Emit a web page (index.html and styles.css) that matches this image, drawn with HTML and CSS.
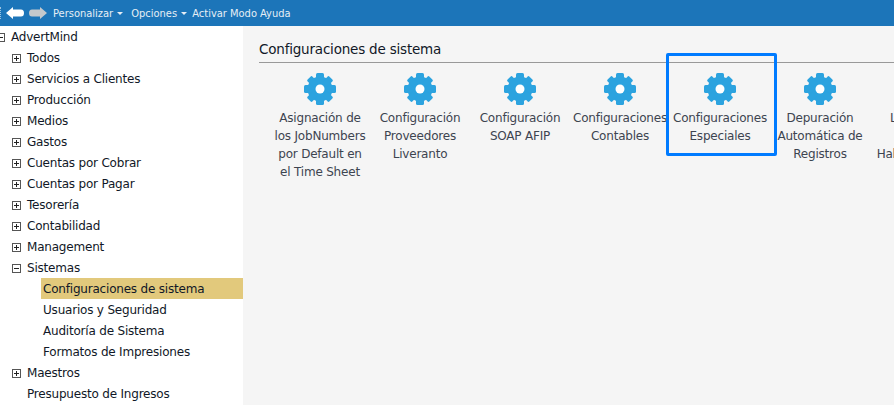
FILE: index.html
```html
<!DOCTYPE html>
<html>
<head>
    <title>Configuraciones de sistema</title>
    <link rel="stylesheet" href="styles.css">
</head>
<body>
    <div class="topbar">
        <span class="grip"></span>
        <svg class="arrow" width="18" height="12" viewBox="0 0 18 12"><path d="M0 6 7 0V2.500H15Q18 2.500 18 6T15 9.500H7V12Z" fill="#fff"/></svg>
        <svg class="arrow" width="18" height="12" viewBox="0 0 18 12"><path d="M18 6 11 0V2.500H3Q0 2.500 0 6T3 9.500H11V12Z" fill="#c4c8cc"/></svg>
        <a class="menu first">Personalizar <i class="caret"></i></a>
        <a class="menu">Opciones <i class="caret"></i></a>
        <a class="menu">Activar Modo Ayuda</a>
    </div>
    <div class="content">
        <div class="sidebar">
            <div class="row root"><span class="box minus"></span>AdvertMind</div>
            <div class="row"><span class="box plus"></span>Todos</div>
            <div class="row"><span class="box plus"></span>Servicios a Clientes</div>
            <div class="row"><span class="box plus"></span>Producción</div>
            <div class="row"><span class="box plus"></span>Medios</div>
            <div class="row"><span class="box plus"></span>Gastos</div>
            <div class="row"><span class="box plus"></span>Cuentas por Cobrar</div>
            <div class="row"><span class="box plus"></span>Cuentas por Pagar</div>
            <div class="row"><span class="box plus"></span>Tesorería</div>
            <div class="row"><span class="box plus"></span>Contabilidad</div>
            <div class="row"><span class="box plus"></span>Management</div>
            <div class="row"><span class="box minus"></span>Sistemas</div>
            <div class="row sub selected">Configuraciones de sistema</div>
            <div class="row sub">Usuarios y Seguridad</div>
            <div class="row sub">Auditoría de Sistema</div>
            <div class="row sub">Formatos de Impresiones</div>
            <div class="row"><span class="box plus"></span>Maestros</div>
            <div class="row leaf">Presupuesto de Ingresos</div>
        </div>
        <div class="main">
            <h1>Configuraciones de sistema</h1>
            <div class="items">
                <div class="item">
                    <svg class="gear" viewBox="0 0 32 32"><use href="#gear"/></svg>
                    <span>Asignación de los JobNumbers por Default en el Time Sheet</span>
                </div>
                <div class="item">
                    <svg class="gear" viewBox="0 0 32 32"><use href="#gear"/></svg>
                    <span>Configuración Proveedores Liveranto</span>
                </div>
                <div class="item">
                    <svg class="gear" viewBox="0 0 32 32"><use href="#gear"/></svg>
                    <span>Configuración SOAP AFIP</span>
                </div>
                <div class="item">
                    <svg class="gear" viewBox="0 0 32 32"><use href="#gear"/></svg>
                    <span>Configuraciones Contables</span>
                </div>
                <div class="item active">
                    <svg class="gear" viewBox="0 0 32 32"><use href="#gear"/></svg>
                    <span>Configuraciones Especiales</span>
                </div>
                <div class="item">
                    <svg class="gear" viewBox="0 0 32 32"><use href="#gear"/></svg>
                    <span>Depuración Automática de Registros</span>
                </div>
                <div class="item">
                    <svg class="gear" viewBox="0 0 32 32"><use href="#gear"/></svg>
                    <span>Liberación<br>Reportes<br>Habilitación de</span>
                </div>
            </div>
        </div>
    </div>
    <svg width="0" height="0" class="defs">
        <defs>
            <g id="gear" fill="#2ca3df">
                <circle cx="16" cy="16" r="12.5"/>
                <rect x="12" y="0" width="8" height="32" rx="1.5"/>
                <rect x="0" y="12" width="32" height="8" rx="1.5"/>
                <rect x="12.500" y="0.500" width="7" height="31" rx="1.5" transform="rotate(45 16 16)"/>
                <rect x="12.500" y="0.500" width="7" height="31" rx="1.5" transform="rotate(135 16 16)"/>
                <circle cx="16" cy="16" r="4.5" fill="#fff"/>
            </g>
        </defs>
    </svg>
</body>
</html>
```
FILE: styles.css
```css
body {
    margin: 0;
    height: 405px;
    overflow: hidden;
    font-family: "DejaVu Sans", sans-serif;
    font-size: 12px;
    letter-spacing: -0.2px;
    color: #111827;
    background-color: #f5f5f5;
}

.topbar {
    height: 26px;
    background-color: #1c75b9;
    color: #e6eef5;
    display: flex;
    align-items: center;
    font-family: "DejaVu Sans Condensed", "DejaVu Sans", sans-serif;
    font-size: 11px;
    letter-spacing: 0;
}

.grip {
    width: 0;
    height: 12px;
    margin-right: 5px;
    border-left: 1px dotted #9cc4e2;
}

.arrow {
    margin-right: 5px;
}

.menu {
    margin-right: 5px;
    white-space: nowrap;
}

.menu.first {
    margin-left: 1px;
    margin-right: 8px;
}

.caret {
    display: inline-block;
    width: 0;
    height: 0;
    margin-left: 1px;
    vertical-align: middle;
    border-top: 3px solid #e6eef5;
    border-left: 3px solid transparent;
    border-right: 3px solid transparent;
}

.content {
    display: flex;
    height: 379px;
}

.sidebar {
    width: 243px;
    flex-shrink: 0;
    background-color: #fff;
}

.row {
    box-sizing: border-box;
    height: 21px;
    line-height: 19px;
    padding-top: 2px;
    display: flex;
    align-items: center;
    padding-left: 12px;
    white-space: nowrap;
}

.row.root {
    padding-left: 0;
}

.row.leaf {
    padding-left: 27px;
}

.row.sub {
    margin-left: 41px;
    padding-left: 2px;
}

.row.selected {
    background-color: #e2c97c;
}

.box {
    width: 7px;
    height: 7px;
    border: 1px solid #555;
    margin-right: 6px;
    flex-shrink: 0;
    background:
        linear-gradient(#222, #222) center / 5px 1px no-repeat;
}

.box.plus {
    background:
        linear-gradient(#222, #222) center / 5px 1px no-repeat,
        linear-gradient(#222, #222) center / 1px 5px no-repeat;
}

.root .box {
    margin-left: -4px;
    margin-right: 6px;
}

.main {
    flex: 1;
    min-width: 0;
    padding: 14px 0 0 16px;
    overflow: hidden;
}

h1 {
    margin: 0;
    font-size: 13.5px;
    font-weight: normal;
    height: 22px;
    line-height: 19px;
    border-bottom: 1px solid #999;
}

.items {
    display: flex;
    margin-left: 11px;
    margin-top: 10px;
}

.item {
    width: 100px;
    flex-shrink: 0;
    text-align: center;
    line-height: 18px;
    color: #3d4450;
    position: relative;
}

.gear {
    display: block;
    width: 32px;
    height: 32px;
    margin: 0 auto 4px;
}

.item span {
    display: block;
    padding: 0 2px;
}

.item.active:after {
    content: "";
    position: absolute;
    left: -4px;
    top: -20px;
    width: 105px;
    height: 97px;
    border: 3px solid #007bff;
    border-radius: 2px;
}

.defs {
    position: absolute;
}
```
